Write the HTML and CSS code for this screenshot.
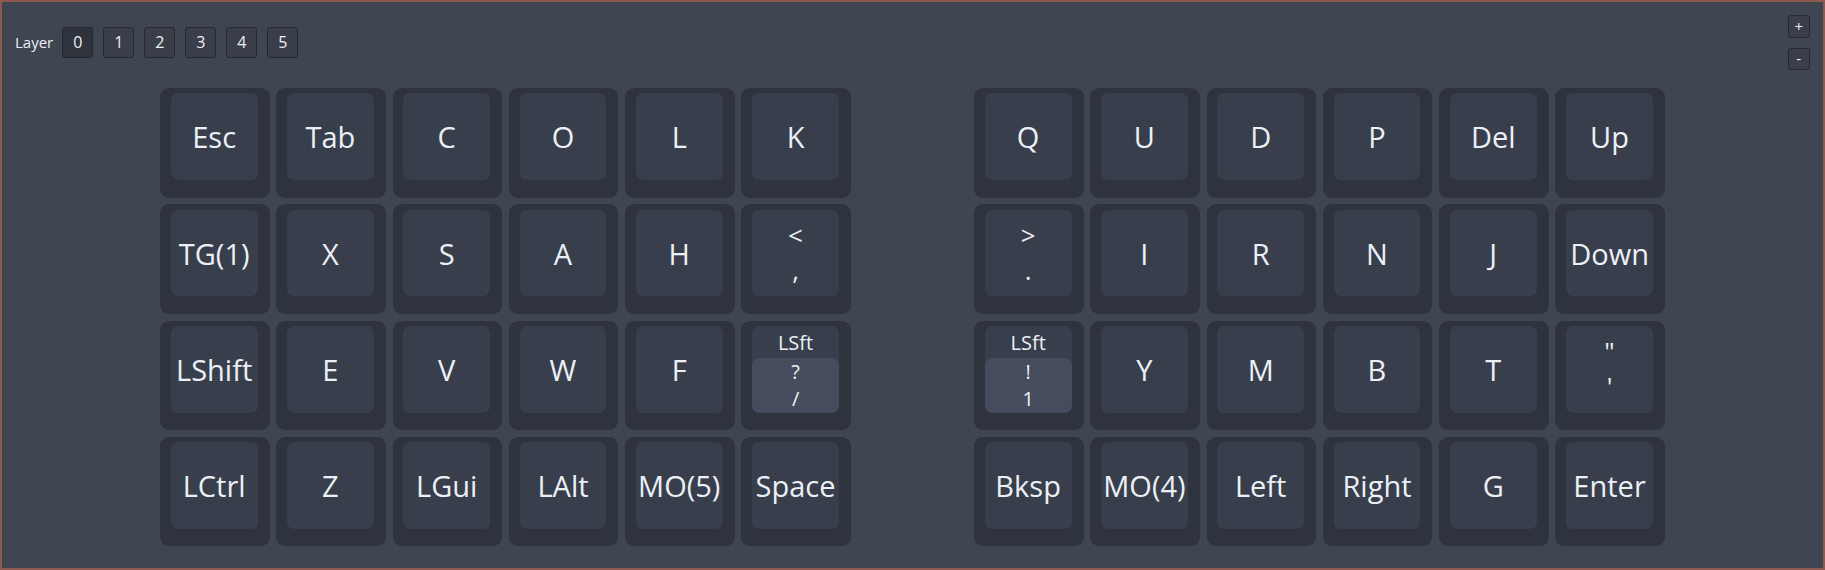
FILE: index.html
```html
<!DOCTYPE html>
<html lang="en">
<head>
    <meta charset="UTF-8" />
    <meta name="viewport" content="width=device-width, initial-scale=1.0" />
    <title>Keymap</title>
    <link rel="stylesheet" href="styles.css">
</head>
<body>
    <div class="window">
        <div class="toolbar">
            <span class="toolbar-label">Layer</span>
            <button class="layer-btn active">0</button>
            <button class="layer-btn">1</button>
            <button class="layer-btn">2</button>
            <button class="layer-btn">3</button>
            <button class="layer-btn">4</button>
            <button class="layer-btn">5</button>
        </div>

        <div class="zoom">
            <button class="zoom-btn">+</button>
            <button class="zoom-btn">-</button>
        </div>

        <div class="keyboard">
            <div class="half" id="leftHalf"></div>
            <div class="half" id="rightHalf"></div>
        </div>
    </div>

    <script>
        const izquierda = [
            ["Esc", "Tab", "C", "O", "L", "K"],
            ["TG(1)", "X", "S", "A", "H", ["<", ","]],
            ["LShift", "E", "V", "W", "F", { hold: "LSft", tap: ["?", "/"] }],
            ["LCtrl", "Z", "LGui", "LAlt", "MO(5)", "Space"]
        ];

        const derecha = [
            ["Q", "U", "D", "P", "Del", "Up"],
            [[">", "."], "I", "R", "N", "J", "Down"],
            [{ hold: "LSft", tap: ["!", "1"] }, "Y", "M", "B", "T", ["\"", "'"]],
            ["Bksp", "MO(4)", "Left", "Right", "G", "Enter"]
        ];

        function crearTecla(k) {
            const key = document.createElement("div");
            key.className = "key";
            const cap = document.createElement("div");
            cap.className = "cap";

            if (typeof k === "string") {
                cap.textContent = k;
            } else if (Array.isArray(k)) {
                cap.classList.add("double");
                cap.innerHTML = k.map(t => `<span>${t}</span>`).join("");
            } else {
                cap.classList.add("holdtap");
                cap.innerHTML = `<div class="hold">${k.hold}</div>
                    <div class="tap">${k.tap.map(t => `<span>${t}</span>`).join("")}</div>`;
            }

            key.appendChild(cap);
            return key;
        }

        function llenar(id, filas) {
            const half = document.getElementById(id);
            filas.forEach(fila => fila.forEach(k => half.appendChild(crearTecla(k))));
        }

        llenar("leftHalf", izquierda);
        llenar("rightHalf", derecha);
    </script>
</body>
</html>
```

FILE: styles.css
```css
:root {
    --fondo: #404552;
    --tecla: #2f333e;
    --cap: #393e4c;
    --tap: #464c5d;
    --texto: #ebf0f7;
    --borde: #8c5a4e;
}

body {
    margin: 0;
    font-family: 'Open Sans', 'Noto Sans', sans-serif;
    color: var(--texto);
}

.window {
    position: relative;
    height: 570px;
    box-sizing: border-box;
    border: 2px solid var(--borde);
    background: var(--fondo);
}

.toolbar {
    display: flex;
    align-items: center;
    gap: 10px;
    padding: 24.7px 0 0 13px;
}

.toolbar-label {
    font-size: 15px;
    margin-right: -1px;
}

.layer-btn, .zoom-btn {
    padding: 0;
    margin: 0;
    font-family: inherit;
    color: var(--texto);
    background: #3a3e49;
    border: 1px solid #262930;
    border-radius: 3px;
    cursor: pointer;
}

.layer-btn {
    width: 31px;
    height: 31px;
    font-size: 16px;
}

.layer-btn.active {
    background: #2f333c;
}

.zoom {
    position: absolute;
    top: 13px;
    right: 13px;
    display: flex;
    flex-direction: column;
    gap: 10px;
}

.zoom-btn {
    width: 22.5px;
    height: 22.5px;
    font-size: 15px;
    line-height: 1;
}

.keyboard {
    display: flex;
    gap: 123px;
    padding: 30.3px 0 0 158px;
}

.half {
    display: grid;
    grid-template-columns: repeat(6, 109.6px);
    grid-auto-rows: 109.6px;
    gap: 6.7px;
}

.key {
    display: flex;
    padding: 5.5px 12px 17.5px 10.7px;
    background: var(--tecla);
    border-radius: 9px;
}

.cap {
    flex: 1;
    display: flex;
    align-items: center;
    justify-content: center;
    background: var(--cap);
    border-radius: 7px;
    font-size: 29px;
    white-space: nowrap;
}

.cap.double {
    flex-direction: column;
    font-size: 26px;
}

.cap.double span {
    display: block;
    height: 35.5px;
    line-height: 35.5px;
}

.cap.holdtap {
    flex-direction: column;
    align-items: stretch;
    font-size: 20px;
}

.hold {
    height: 32px;
    display: flex;
    align-items: center;
    justify-content: center;
}

.tap {
    flex: 1;
    display: flex;
    flex-direction: column;
    align-items: center;
    justify-content: center;
    background: var(--tap);
    border-radius: 8px;
}

.tap span {
    display: block;
    height: 27px;
    line-height: 27px;
}
```
